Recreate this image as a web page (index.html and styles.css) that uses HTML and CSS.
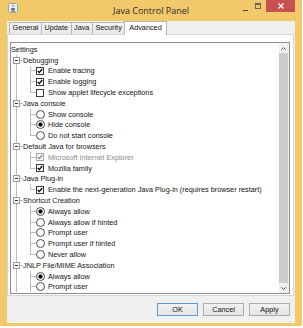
FILE: index.html
```html
<!DOCTYPE html>
<html lang="en">
<head>
  <meta charset="UTF-8"/>
  <title>Java Control Panel</title>
  <link rel="stylesheet" href="styles.css">
</head>
<body>
  <div class="window">
    <!-- ========== TITLE BAR ========== -->
    <div class="titlebar">
      <div class="app-icon">
        <svg width="10" height="10" viewBox="0 0 10 10">
          <rect x=".5" y=".5" width="9" height="9" rx="1" fill="#eaf0f6" stroke="#8ea5bd"/>
          <path d="M3 5h4v1.3a2 1.6 0 0 1-4 0z" fill="#5382a1"/>
          <path d="M4.4 1.4c-.7.8.7 1.3 0 2.6M5.8 1.9c-.5.6.5 1 0 2" stroke="#e76f00" fill="none" stroke-width=".8"/>
          <path d="M2.4 8.4h5.2" stroke="#e76f00" stroke-width=".9"/>
        </svg>
      </div>
      <div class="title">Java Control Panel</div>
      <div class="win-btns">
        <span class="wb-min"></span>
        <span class="wb-max"></span>
        <span class="wb-close">
          <svg width="6" height="6" viewBox="0 0 6 6"><path d="M.5 .5l5 5M5.5 .5l-5 5" stroke="#fff" stroke-width="1.2"/></svg>
        </span>
      </div>
    </div>

    <div class="client">
      <!-- ========== TABS ========== -->
      <ul class="tabs">
        <li>General</li>
        <li>Update</li>
        <li>Java</li>
        <li>Security</li>
        <li class="active">Advanced</li>
      </ul>

      <div class="panel">
        <div class="tree-box">
          <div class="tree">
            <div class="row">Settings</div>

            <div class="row"><span class="g g-node"><i class="exp"></i></span>Debugging</div>
            <div class="row"><span class="g g-pipe"></span><span class="g g-branch"></span><span class="ctl"><i class="cb on"><svg viewBox="0 0 6 6"><path d="M.8 3l1.5 1.6L5.2 1" /></svg></i></span>Enable tracing</div>
            <div class="row"><span class="g g-pipe"></span><span class="g g-branch"></span><span class="ctl"><i class="cb on"><svg viewBox="0 0 6 6"><path d="M.8 3l1.5 1.6L5.2 1" /></svg></i></span>Enable logging</div>
            <div class="row"><span class="g g-pipe"></span><span class="g g-branch last"></span><span class="ctl"><i class="cb"></i></span>Show applet lifecycle exceptions</div>

            <div class="row"><span class="g g-node"><i class="exp"></i></span>Java console</div>
            <div class="row"><span class="g g-pipe"></span><span class="g g-branch"></span><span class="ctl"><i class="rb"></i></span>Show console</div>
            <div class="row"><span class="g g-pipe"></span><span class="g g-branch"></span><span class="ctl"><i class="rb on"></i></span>Hide console</div>
            <div class="row"><span class="g g-pipe"></span><span class="g g-branch last"></span><span class="ctl"><i class="rb"></i></span>Do not start console</div>

            <div class="row"><span class="g g-node"><i class="exp"></i></span>Default Java for browsers</div>
            <div class="row dis"><span class="g g-pipe"></span><span class="g g-branch"></span><span class="ctl"><i class="cb on"><svg viewBox="0 0 6 6"><path d="M.8 3l1.5 1.6L5.2 1" /></svg></i></span>Microsoft Internet Explorer</div>
            <div class="row"><span class="g g-pipe"></span><span class="g g-branch last"></span><span class="ctl"><i class="cb on"><svg viewBox="0 0 6 6"><path d="M.8 3l1.5 1.6L5.2 1" /></svg></i></span>Mozilla family</div>

            <div class="row"><span class="g g-node"><i class="exp"></i></span>Java Plug-in</div>
            <div class="row"><span class="g g-pipe"></span><span class="g g-branch last"></span><span class="ctl"><i class="cb on"><svg viewBox="0 0 6 6"><path d="M.8 3l1.5 1.6L5.2 1" /></svg></i></span>Enable the next-generation Java Plug-in (requires browser restart)</div>

            <div class="row"><span class="g g-node"><i class="exp"></i></span>Shortcut Creation</div>
            <div class="row"><span class="g g-pipe"></span><span class="g g-branch"></span><span class="ctl"><i class="rb on"></i></span>Always allow</div>
            <div class="row"><span class="g g-pipe"></span><span class="g g-branch"></span><span class="ctl"><i class="rb"></i></span>Always allow if hinted</div>
            <div class="row"><span class="g g-pipe"></span><span class="g g-branch"></span><span class="ctl"><i class="rb"></i></span>Prompt user</div>
            <div class="row"><span class="g g-pipe"></span><span class="g g-branch"></span><span class="ctl"><i class="rb"></i></span>Prompt user if hinted</div>
            <div class="row"><span class="g g-pipe"></span><span class="g g-branch last"></span><span class="ctl"><i class="rb"></i></span>Never allow</div>

            <div class="row"><span class="g g-node"><i class="exp"></i></span>JNLP File/MIME Association</div>
            <div class="row"><span class="g g-pipe"></span><span class="g g-branch"></span><span class="ctl"><i class="rb on"></i></span>Always allow</div>
            <div class="row"><span class="g g-pipe"></span><span class="g g-branch"></span><span class="ctl"><i class="rb"></i></span>Prompt user</div>
          </div>

          <div class="vscroll">
            <div class="sb-btn"><svg width="5" height="3" viewBox="0 0 5 3"><path d="M.3 2.7L2.5 .6l2.2 2.1" /></svg></div>
            <div class="sb-thumb"></div>
            <div class="sb-btn"><svg width="5" height="3" viewBox="0 0 5 3"><path d="M.3 .3l2.2 2.1L4.7 .3" /></svg></div>
          </div>
        </div>
      </div>

      <!-- ========== BUTTONS ========== -->
      <div class="buttons">
        <button class="btn btn-default">OK</button>
        <button class="btn">Cancel</button>
        <button class="btn">Apply</button>
      </div>
    </div>
  </div>
</body>
</html>
```

FILE: styles.css
```css
*{margin:0;padding:0;box-sizing:border-box}
body{background:#fff;font-family:'Liberation Sans',Arial,sans-serif;font-size:7.3px;color:#1b1b1b}

/* window frame */
.window{width:302px;height:326px;background:#f1c86a;padding:0 7px 3px;display:flex;flex-direction:column}
.titlebar{height:21px;display:grid;grid-template-columns:1fr auto 1fr;align-items:start}
.app-icon{margin:3px 0 0 1px;height:10px}
.app-icon svg{display:block}
.title{font-family:'Open Sans',sans-serif;font-size:9px;line-height:13px;margin-top:4px;color:#2b2b2b}
.win-btns{justify-self:end;display:flex;align-items:flex-start}
.wb-min{width:5px;height:1px;background:#444;margin:10px 7px 0 0}
.wb-max{width:6px;height:6px;border:1px solid #666;border-top-width:2px;margin:3px 5px 0 0}
.wb-close{width:29px;height:12px;background:#c75050;display:flex;align-items:center;justify-content:center}
.wb-close svg{display:block}

/* client area */
.client{flex:1;background:#f0f0f0;display:flex;flex-direction:column}
.tabs{list-style:none;height:13px;display:flex;align-items:flex-end;padding-left:2px}
.tabs li{height:12px;line-height:10px;padding:0 2.5px;border:1px solid #b5b5b5;border-bottom:none;margin-right:-1px;background:linear-gradient(#f4f4f4,#e9e9e9);color:#111}
.tabs li.active{height:14px;line-height:12px;padding:0 4px;background:#fff;margin-bottom:-1px;position:relative;z-index:1}

.panel{height:262px;margin-right:1px;background:#fff;border:1px solid #d6d6d6;padding:7px 3px 1px 2px}
.tree-box{height:252px;border:1px solid #8f9092;display:flex}

/* tree */
.tree{flex:1;padding-top:1px;overflow:hidden}
.row{height:10.8px;display:flex;align-items:center;white-space:nowrap;color:#141414}
.row.dis{color:#8a8a8a}
.g{align-self:stretch;flex:none}
.g-pipe{width:12px;background:linear-gradient(#bbb,#bbb) 5px 0/1px 100% no-repeat}
.g-node{width:12px;display:flex;align-items:center;background:linear-gradient(#bbb,#bbb) 5px 0/1px 100% no-repeat,linear-gradient(#bbb,#bbb) 9px 50%/3px 1px no-repeat}
.g-branch{width:13px;background:linear-gradient(#bbb,#bbb) 7px 0/1px 100% no-repeat,linear-gradient(#bbb,#bbb) 7px 50%/6px 1px no-repeat}
.g-branch.last{background:linear-gradient(#bbb,#bbb) 7px 0/1px 50% no-repeat,linear-gradient(#bbb,#bbb) 7px 50%/6px 1px no-repeat}
.exp{width:7px;height:7px;margin-left:2px;border:1px solid #999;background:linear-gradient(#333,#333) center/3px 1px no-repeat,#fff}

.ctl{width:12px;flex:none;display:flex;align-items:center}
.cb{width:8px;height:8px;border:1px solid #3a3a3a;background:#fff;display:flex;align-items:center;justify-content:center}
.cb svg{width:6px;height:6px;display:block}
.cb path{fill:none;stroke:#000;stroke-width:1.3}
.dis .cb{border-color:#a5a5a5}
.dis .cb path{stroke:#8a8a8a}
.rb{width:9px;height:9px;border:1px solid #4a4a4a;border-radius:50%;background:#fff}
.rb.on{background:radial-gradient(circle,#000 0 1.8px,#fff 2.4px)}

/* scrollbar */
.vscroll{width:11px;background:#f0f0f0;border-left:1px solid #fafafa;display:flex;flex-direction:column;padding:0 1px 0 0}
.sb-btn{height:10px;display:flex;align-items:center;justify-content:center}
.sb-btn svg{display:block}
.sb-btn path{fill:none;stroke:#555;stroke-width:1}
.sb-thumb{flex:1;background:#cdcdcd}

/* bottom buttons */
.buttons{height:27px;display:flex;justify-content:flex-end;align-items:flex-start;gap:5px;padding:7px 5px 0 0}
.btn{width:41px;height:13px;font:7.3px 'Liberation Sans',Arial,sans-serif;color:#111;border:1px solid #acacac;background:linear-gradient(#f2f2f2,#e4e4e4);cursor:pointer}
.btn-default{border-color:#5b9bd5}
```
